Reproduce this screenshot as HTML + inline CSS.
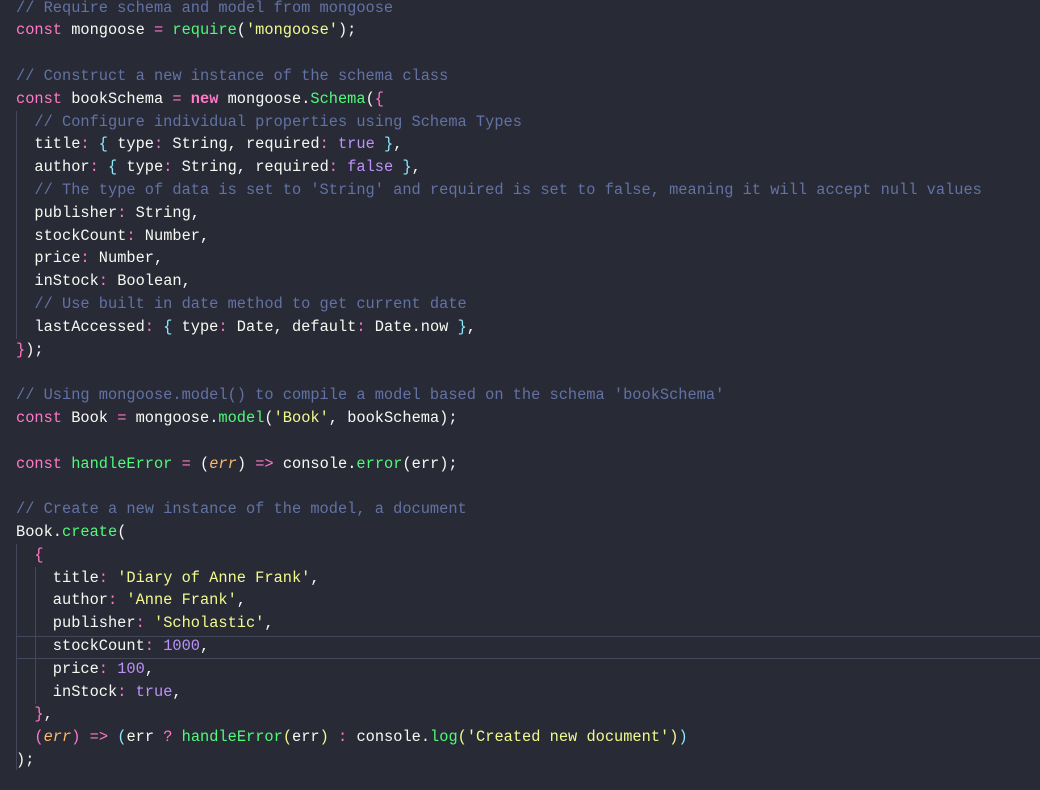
<!DOCTYPE html>
<html><head><meta charset="utf-8"><style>
html,body{margin:0;padding:0;background:#282a36;width:1040px;height:790px;overflow:hidden}
pre{margin:0;position:absolute;left:16px;top:-3.4px;font-family:"Liberation Mono",monospace;font-size:15.33px;line-height:22.8px;color:#f8f8f2;white-space:pre}
.c{color:#6272a4}.k{color:#ff79c6}.f{color:#50fa7b}.s{color:#f1fa8c}.n{color:#bd93f9}.p{color:#ffb86c;font-style:italic}.o{color:#ff79c6}.y{color:#f1fa8c}.b{color:#8be9fd}
.g{position:absolute;width:1px;background:#44475a}
.hl{position:absolute;left:16px;top:636px;width:1030px;height:21px;border:1px solid #44475a;border-right:none}
</style></head><body>
<div class="hl"></div>
<div class="g" style="left:16px;top:111px;height:228px"></div>
<div class="g" style="left:16px;top:544px;height:226px"></div>
<div class="g" style="left:35px;top:567px;height:137px"></div>
<pre><span class="c">// Require schema and model from mongoose</span>
<span class="k">const</span> mongoose <span class="o">=</span> <span class="f">require</span>(<span class="s">'mongoose'</span>);

<span class="c">// Construct a new instance of the schema class</span>
<span class="k">const</span> bookSchema <span class="o">=</span> <span class="k"><b>new</b></span> mongoose.<span class="f">Schema</span>(<span class="k">{</span>
  <span class="c">// Configure individual properties using Schema Types</span>
  title<span class="o">:</span> <span class="b">{</span> type<span class="o">:</span> String, required<span class="o">:</span> <span class="n">true</span> <span class="b">}</span>,
  author<span class="o">:</span> <span class="b">{</span> type<span class="o">:</span> String, required<span class="o">:</span> <span class="n">false</span> <span class="b">}</span>,
  <span class="c">// The type of data is set to 'String' and required is set to false, meaning it will accept null values</span>
  publisher<span class="o">:</span> String,
  stockCount<span class="o">:</span> Number,
  price<span class="o">:</span> Number,
  inStock<span class="o">:</span> Boolean,
  <span class="c">// Use built in date method to get current date</span>
  lastAccessed<span class="o">:</span> <span class="b">{</span> type<span class="o">:</span> Date, default<span class="o">:</span> Date.now <span class="b">}</span>,
<span class="k">}</span>);

<span class="c">// Using mongoose.model() to compile a model based on the schema 'bookSchema'</span>
<span class="k">const</span> Book <span class="o">=</span> mongoose.<span class="f">model</span>(<span class="s">'Book'</span>, bookSchema);

<span class="k">const</span> <span class="f">handleError</span> <span class="o">=</span> (<span class="p">err</span>) <span class="o">=&gt;</span> console.<span class="f">error</span>(err);

<span class="c">// Create a new instance of the model, a document</span>
Book.<span class="f">create</span>(
  <span class="k">{</span>
    title<span class="o">:</span> <span class="s">'Diary of Anne Frank'</span>,
    author<span class="o">:</span> <span class="s">'Anne Frank'</span>,
    publisher<span class="o">:</span> <span class="s">'Scholastic'</span>,
    stockCount<span class="o">:</span> <span class="n">1000</span>,
    price<span class="o">:</span> <span class="n">100</span>,
    inStock<span class="o">:</span> <span class="n">true</span>,
  <span class="k">}</span>,
  <span class="k">(</span><span class="p">err</span><span class="k">)</span> <span class="o">=&gt;</span> <span class="b">(</span>err <span class="o">?</span> <span class="f">handleError</span><span class="y">(</span>err<span class="y">)</span> <span class="o">:</span> console.<span class="f">log</span><span class="y">(</span><span class="s">'Created new document'</span><span class="y">)</span><span class="b">)</span>
);</pre>
</body></html>
